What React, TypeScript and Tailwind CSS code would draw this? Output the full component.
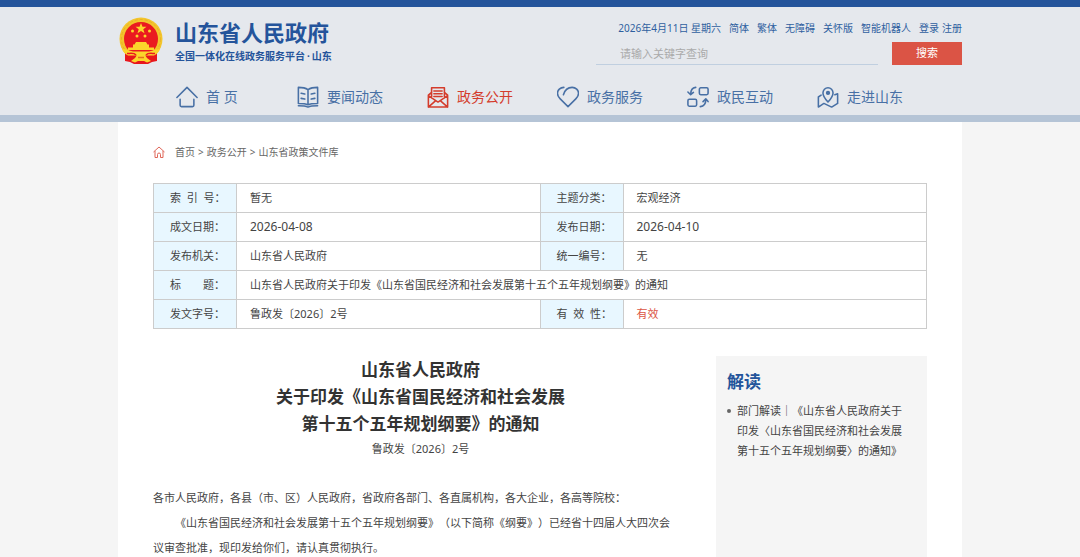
import type { ReactNode } from 'react'

const topLinks = ['简体', '繁体', '无障碍', '关怀版', '智能机器人']

const navItems: { label: string; icon: ReactNode; active?: boolean }[] = [
  {
    label: '首 页',
    icon: (
      <path d="M1 12.5 12 1.5l11 11M4.500 14.500v6.500a1.500 1.500 0 0 0 1.500 1.500h12a1.500 1.500 0 0 0 1.500-1.500v-6.500" />
    ),
  },
  {
    label: '要闻动态',
    icon: (
      <>
        <path d="M12 4C9 2 5 1.500 1.500 1.500V19c4 0 7.500 0 10.500 1.500 3-1.500 6.500-1.500 10.500-1.500V1.500C19 1.500 15 2 12 4zM12 4v16.500" />
        <path d="M4.500 8l4 .8M4.500 13.500l4 .8M19.500 8l-4 .8M19.500 13.500l-4 .8M1.500 21.500c4 0 7.500 0 10.500 1.500 3-1.500 6.500-1.500 10.500-1.500" />
      </>
    ),
  },
  {
    label: '政务公开',
    active: true,
    icon: (
      <>
        <path d="M5 7 1.500 10v13h21V10L19 7M5 13V2h14v11M1.500 10.500 12 17.500l10.500-7M1.500 23l8-7M22.500 23l-8-7" />
        <path d="M7.500 5.500h9M7.500 8.500h9M7.500 11.500h9" />
      </>
    ),
  },
  {
    label: '政务服务',
    icon: (
      <path d="M7 9.500c1.500-5 5-8 9.500-8 4 0 7 3 7 6.500 0 2.500-1.500 4.500-3 6L12 22.500 3.500 14C2 12.500.5 10.500.5 8c0-3.500 3-6.500 7-6.500" />
    ),
  },
  {
    label: '政民互动',
    icon: (
      <>
        <rect x="13.500" y="2" width="9.500" height="7.500" rx="1.500" />
        <rect x="1" y="14.500" width="9.500" height="7.500" rx="1.500" />
        <path d="M9.500 1.500C5.500 2 4 4.500 4 9M1 6.500 4 9.500l3-2.500M14.500 22.500C18.500 22 20.500 19.500 20.500 15M17.500 17l3-3 2.500 3" />
      </>
    ),
  },
  {
    label: '走进山东',
    icon: (
      <>
        <path d="M12 17.500C8.500 13.500 6.500 10.500 6.500 7.500a5.500 5.500 0 0 1 11 0c0 3-2 6-5.500 10z" />
        <circle cx="12" cy="7.500" r="1.500" fill="currentColor" />
        <path d="M4.500 10 1.500 12v11l6-4 8.500 4 6.500-4V8.500l-3 1" />
      </>
    ),
  },
]

const crumbs = ['首页', '政务公开', '山东省政策文件库']

const docTitle = '山东省人民政府关于印发《山东省国民经济和社会发展第十五个五年规划纲要》的通知'

function Emblem() {
  return (
    <svg className="h-12 w-11 shrink-0" viewBox="0 0 44 48" aria-label="国徽">
      <circle cx="22" cy="22" r="21.500" fill="#f3c52c" />
      <circle cx="22" cy="22" r="19.500" fill="none" stroke="#e9b127" strokeDasharray="3 2" />
      <circle cx="22" cy="22" r="17" fill="#ea1a20" />
      <path d="M6 33v11l5 1 4 2h14l4-2 5-1V33l-6 4H12z" fill="#e8161d" />
      <path d="M22 6l1.500 3.800h4l-3.200 2.500 1.200 3.900-3.500-2.300-3.500 2.300 1.200-3.900L16.500 9.800h4z" fill="#fbd52b" />
      <g fill="#fbd52b">
        <circle cx="13.500" cy="14" r="1.500" />
        <circle cx="30.500" cy="14" r="1.500" />
        <circle cx="18" cy="19" r="1.500" />
        <circle cx="26" cy="19" r="1.500" />
        <path d="M17 25h10l1.500 2.500H30v3h5v2.500H9v-2.500h5v-3h1.500z" />
        <path d="M3 32c4 0 7 1.500 11 2.500h16c4-1 7-2.500 11-2.500-1 3-3 5-6 6.500H9C6 37 4 35 3 32z" />
        <path d="M18 38h8l2 3 4 3-4 1.500-3-1.500h-6l-3 1.500-4-1.500 4-3z" />
      </g>
      <path d="M8 36.500c4 0 7-1 9 1.500M36 36.500c-4 0-7-1-9 1.500" fill="none" stroke="#ea1a20" strokeWidth="1.500" />
      <path d="M19 40.500h6" stroke="#e6701f" strokeWidth="1.500" />
    </svg>
  )
}

function LabelCell({ children }: { children: ReactNode }) {
  return (
    <th scope="row" className="border border-[#ccc] bg-[#e8f7ff] pl-4 text-left font-normal whitespace-nowrap">
      {children}
    </th>
  )
}

function ValueCell({ children, span, className = '' }: { children: ReactNode; span?: number; className?: string }) {
  return (
    <td colSpan={span} className={`border border-[#ccc] pl-[13px] ${className}`}>
      {children}
    </td>
  )
}

function Header() {
  return (
    <header className="border-t-7 border-b-7 border-t-[#24549b] border-b-[#b5c4d6] bg-[#e5e8ed]">
      <div className="mx-auto max-w-[844px]">
        <div className="flex justify-between pt-2.5 pb-3.5">
          <a href="#" className="flex items-start gap-3 pl-px text-[#24549b]">
            <Emblem />
            <span className="flex flex-col">
              <span className="text-[22px] leading-[30px] font-bold">山东省人民政府</span>
              <span className="text-[10px] leading-[18px] font-bold">
                全国一体化在线政务服务平台<span className="px-0.5">·</span>山东
              </span>
            </span>
          </a>

          <div className="w-[366px]">
            <div className="flex h-[22px] items-center justify-end gap-2 text-[10px] whitespace-nowrap text-[#2f5f9f]">
              <span>2026年4月11日 星期六</span>
              {topLinks.map((link) => (
                <a key={link} href="#">
                  {link}
                </a>
              ))}
              <span className="flex gap-[3px]">
                <a href="#">登录</a>
                <a href="#">注册</a>
              </span>
            </div>
            <form className="flex gap-3.5 pt-[3px]">
              <input
                type="text"
                aria-label="搜索关键字"
                placeholder="请输入关键字查询"
                className="h-[23px] min-w-0 flex-1 border-b border-[#c0cfe0] px-6 text-[11px] outline-none placeholder:text-[#aaa]"
              />
              <button type="button" className="h-[23px] w-[70px] bg-[#db5445] text-[11px] text-white">
                搜索
              </button>
            </form>
          </div>
        </div>

        <nav className="flex h-9 pl-[58px]">
          {navItems.map((item) => (
            <a
              key={item.label}
              href="#"
              className={`flex items-center gap-2 text-sm first:w-[121px] not-first:w-[130px] ${
                item.active ? 'text-[#d43c2c]' : 'text-[#4870a5]'
              }`}
            >
              <svg
                className="h-[22px] w-[22px]"
                viewBox="0 0 24 24"
                fill="none"
                stroke="currentColor"
                strokeWidth="1.700"
                strokeLinecap="round"
                strokeLinejoin="round"
              >
                {item.icon}
              </svg>
              {item.label}
            </a>
          ))}
        </nav>
      </div>
    </header>
  )
}

export default function App() {
  return (
    <div className="flex min-h-screen flex-col bg-[#f5f5f5] font-['Noto_Sans','Noto_Sans_CJK_SC',sans-serif] text-[11px] text-[#444] [text-spacing-trim:space-all]" lang="zh-CN">
      <Header />

      <main className="mx-auto flex w-full max-w-[844px] grow flex-col bg-white px-[35px] pt-5">
        {/* Breadcrumb */}
        <div className="flex h-5 items-center text-[10px] text-[#666]">
          <svg className="mr-2.5 h-3 w-3" viewBox="0 0 12 12" fill="none" stroke="#df6659" strokeLinejoin="round">
            <path d="M.5 6 6 1l5.500 5M2 5v6.500h2.500V8.500a1.500 1.500 0 0 1 3 0v3H10V5" />
          </svg>
          {crumbs.map((crumb, i) => (
            <span key={crumb}>
              {i > 0 && <span className="px-[3px]">&gt;</span>}
              <a href="#">{crumb}</a>
            </span>
          ))}
        </div>

        {/* Document info */}
        <table className="mt-[21px] w-full table-fixed border-collapse [&_tr]:h-[29px]">
          <colgroup>
            <col className="w-[83px]" />
            <col />
            <col className="w-[83px]" />
            <col />
          </colgroup>
          <tbody>
            <tr>
              <LabelCell>索&nbsp;&nbsp;引&nbsp;&nbsp;号：</LabelCell>
              <ValueCell>暂无</ValueCell>
              <LabelCell>主题分类：</LabelCell>
              <ValueCell>宏观经济</ValueCell>
            </tr>
            <tr>
              <LabelCell>成文日期：</LabelCell>
              <ValueCell className="text-xs">2026-04-08</ValueCell>
              <LabelCell>发布日期：</LabelCell>
              <ValueCell className="text-xs">2026-04-10</ValueCell>
            </tr>
            <tr>
              <LabelCell>发布机关：</LabelCell>
              <ValueCell>山东省人民政府</ValueCell>
              <LabelCell>统一编号：</LabelCell>
              <ValueCell>无</ValueCell>
            </tr>
            <tr>
              <LabelCell>标　　题：</LabelCell>
              <ValueCell span={3}>{docTitle}</ValueCell>
            </tr>
            <tr>
              <LabelCell>发文字号：</LabelCell>
              <ValueCell>鲁政发〔2026〕2号</ValueCell>
              <LabelCell>有&nbsp;&nbsp;效&nbsp;&nbsp;性：</LabelCell>
              <ValueCell className="text-[#db5445]">有效</ValueCell>
            </tr>
          </tbody>
        </table>

        <div className="mt-[27px] flex grow gap-7">
          <article className="min-w-0 flex-1">
            <h1 className="text-center text-[17px] leading-[27px] font-bold text-[#333]">
              山东省人民政府
              <br />
              关于印发《山东省国民经济和社会发展
              <br />
              第十五个五年规划纲要》的通知
            </h1>
            <p className="text-center leading-6">鲁政发〔2026〕2号</p>
            <div className="pt-6 pr-3 leading-[25px]">
              <p>各市人民政府，各县（市、区）人民政府，省政府各部门、各直属机构，各大企业，各高等院校：</p>
              <p className="indent-[2em]">
                《山东省国民经济和社会发展第十五个五年规划纲要》（以下简称《纲要》）已经省十四届人大四次会议审查批准，现印发给你们，请认真贯彻执行。
              </p>
            </div>
          </article>

          <aside className="w-[211px] bg-[#f5f5f5] pt-3 pr-5 pl-[11px]">
            <h2 className="text-[17px] leading-7 font-bold text-[#24549b]">解读</h2>
            <ul className="pt-[5px]">
              <li className="flex gap-1.5 leading-5">
                <span className="mt-2 h-1 w-1 shrink-0 rounded-full bg-[#666]" />
                <a href="#">部门解读｜《山东省人民政府关于印发〈山东省国民经济和社会发展第十五个五年规划纲要〉的通知》</a>
              </li>
            </ul>
          </aside>
        </div>
      </main>
    </div>
  )
}
